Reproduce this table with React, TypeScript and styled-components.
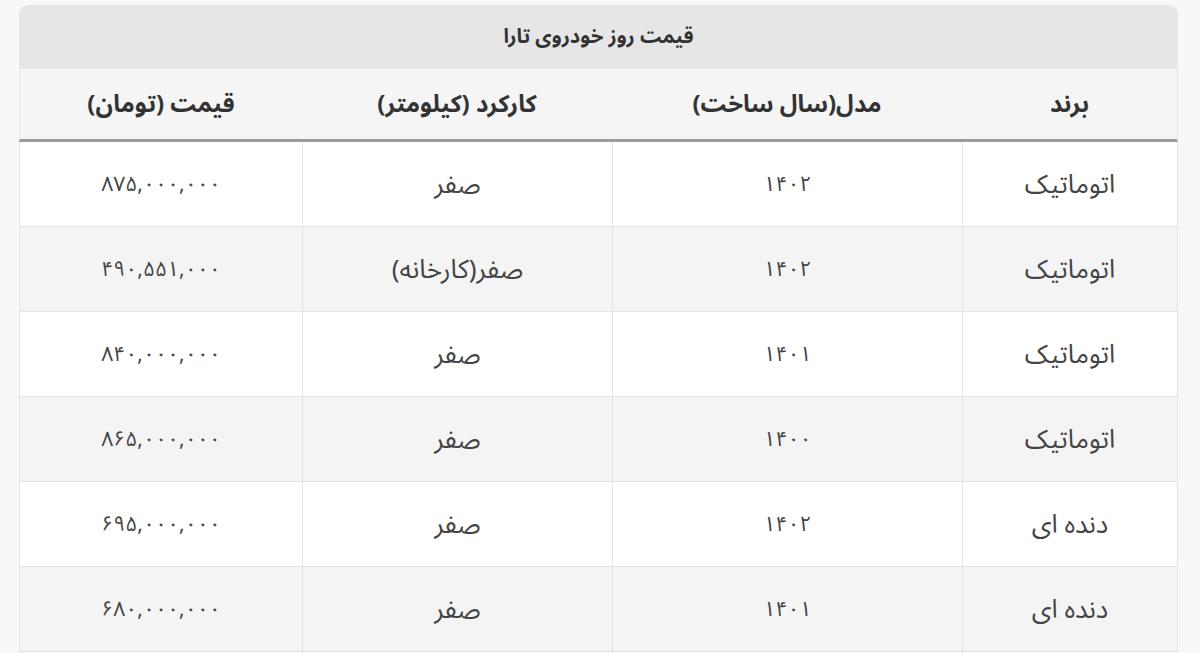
import styled, { createGlobalStyle } from "styled-components";

const GlobalStyle = createGlobalStyle`
  html, body {
    margin: 0;
    padding: 0;
    background: #f8f8f8;
  }
  body {
    font-family: "Noto Sans Arabic", "DejaVu Sans", "Noto Sans", sans-serif;
  }
`;

type Row = {
  brand: string;
  model: string;
  mileage: string;
  price: string;
};

const rows: Row[] = [
  { brand: "اتوماتیک", model: "۱۴۰۲", mileage: "صفر", price: "۸۷۵,۰۰۰,۰۰۰" },
  { brand: "اتوماتیک", model: "۱۴۰۲", mileage: "صفر(کارخانه)", price: "۴۹۰,۵۵۱,۰۰۰" },
  { brand: "اتوماتیک", model: "۱۴۰۱", mileage: "صفر", price: "۸۴۰,۰۰۰,۰۰۰" },
  { brand: "اتوماتیک", model: "۱۴۰۰", mileage: "صفر", price: "۸۶۵,۰۰۰,۰۰۰" },
  { brand: "دنده ای", model: "۱۴۰۲", mileage: "صفر", price: "۶۹۵,۰۰۰,۰۰۰" },
  { brand: "دنده ای", model: "۱۴۰۱", mileage: "صفر", price: "۶۸۰,۰۰۰,۰۰۰" },
];

const App = () => {
  return (
    <>
      <GlobalStyle />
      <Page>
        <PriceTable dir="rtl">
          <colgroup>
            <col style={{ width: 216 }} />
            <col style={{ width: 350 }} />
            <col style={{ width: 310 }} />
            <col />
          </colgroup>
          <thead>
            <tr>
              <TitleCell colSpan={4}>قیمت روز خودروی تارا</TitleCell>
            </tr>
            <tr>
              <HeadCell>برند</HeadCell>
              <HeadCell>مدل(سال ساخت)</HeadCell>
              <HeadCell>کارکرد (کیلومتر)</HeadCell>
              <HeadCell>قیمت (تومان)</HeadCell>
            </tr>
          </thead>
          <tbody>
            {rows.map((r, i) => (
              <BodyRow key={i} $striped={i % 2 === 1}>
                <Cell>{r.brand}</Cell>
                <Cell $numeric>{r.model}</Cell>
                <Cell>{r.mileage}</Cell>
                <Cell $numeric>{r.price}</Cell>
              </BodyRow>
            ))}
          </tbody>
        </PriceTable>
      </Page>
    </>
  );
};

export default App;

const Page = styled.div`
  padding: 5px 22px 0 19px;
  height: 653px;
  box-sizing: border-box;
  overflow: hidden;
`;

const PriceTable = styled.table`
  width: 1159px;
  border-collapse: separate;
  border-spacing: 0;
  table-layout: fixed;
  color: #3f3f3f;
`;

const TitleCell = styled.th`
  height: 64px;
  padding: 0;
  background: #e6e6e6;
  border-radius: 9px 9px 0 0;
  font-size: 20px;
  font-weight: bold;
  color: #333;
  text-align: center;
`;

const HeadCell = styled.th`
  height: 70px;
  padding: 0;
  background: #f5f5f5;
  border-bottom: 3px solid #9c9c9c;
  font-size: 24px;
  font-weight: bold;
  color: #333;
  text-align: center;

  &:first-child {
    border-right: 1px solid #e6e6e6;
  }
  &:last-child {
    border-left: 1px solid #e6e6e6;
  }
`;

const BodyRow = styled.tr<{ $striped: boolean }>`
  background: ${(p) => (p.$striped ? "#f4f4f4" : "#ffffff")};
`;

const Cell = styled.td<{ $numeric?: boolean }>`
  height: 84px;
  padding: 0;
  border-bottom: 1px solid #e4e4e4;
  border-left: 1px solid #e4e4e4;
  font-size: ${(p) => (p.$numeric ? "21px" : "26px")};
  color: #444;
  text-align: center;

  &:first-child {
    border-right: 1px solid #e4e4e4;
  }
`;
